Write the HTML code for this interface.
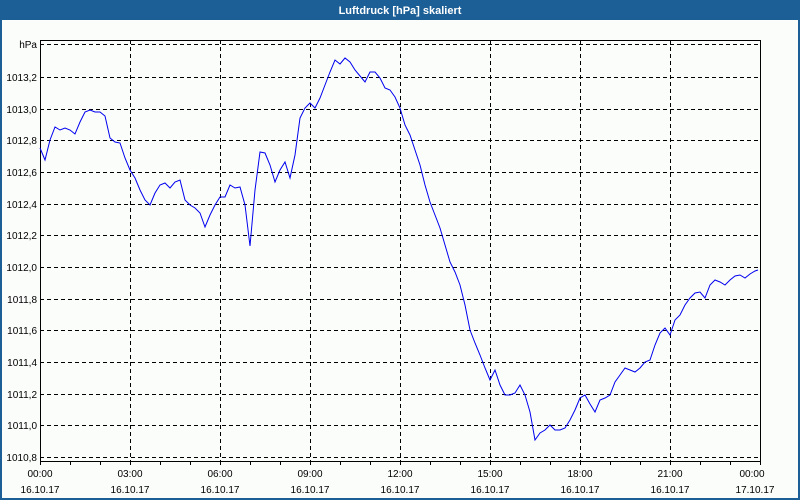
<!DOCTYPE html>
<html><head><style>
body{margin:0;width:800px;height:500px;overflow:hidden;background:#fbfdfb;font-family:"Liberation Sans",sans-serif;}
</style></head><body>
<svg width="800" height="500" xmlns="http://www.w3.org/2000/svg" style="position:absolute;left:0;top:0">
<rect x="0" y="0" width="800" height="500" fill="#1c5f97"/>
<rect x="2" y="20" width="796" height="478" fill="#fbfdfb"/>
<text x="400" y="14" fill="#fff" font-size="11" font-weight="bold" text-anchor="middle" font-family="Liberation Sans,sans-serif">Luftdruck [hPa] skaliert</text>
<g stroke="#000" stroke-width="1" stroke-dasharray="4,3" fill="none">
<path d="M40 44.5H760M40 77.5H760M40 109.5H760M40 140.5H760M40 172.5H760M40 204.5H760M40 235.5H760M40 267.5H760M40 299.5H760M40 330.5H760M40 362.5H760M40 394.5H760M40 425.5H760M40 457.5H760"/>
<path d="M130.5 40V461M220.5 40V461M310.5 40V461M400.5 40V461M490.5 40V461M580.5 40V461M670.5 40V461"/>
</g>
<rect x="40.5" y="40.5" width="720" height="421" fill="none" stroke="#000" stroke-width="1"/>
<g stroke="#000"><path d="M40.5 461v4M70.5 461v4M100.5 461v4M130.5 461v4M160.5 461v4M190.5 461v4M220.5 461v4M250.5 461v4M280.5 461v4M310.5 461v4M340.5 461v4M370.5 461v4M400.5 461v4M430.5 461v4M460.5 461v4M490.5 461v4M520.5 461v4M550.5 461v4M580.5 461v4M610.5 461v4M640.5 461v4M670.5 461v4M700.5 461v4M730.5 461v4M760.5 461v4"/></g>
<g font-size="10" fill="#000" text-anchor="end" font-family="Liberation Sans,sans-serif">
<text x="37" y="48">hPa</text><text x="37" y="81">1013,2</text><text x="37" y="113">1013,0</text><text x="37" y="144">1012,8</text><text x="37" y="176">1012,6</text><text x="37" y="208">1012,4</text><text x="37" y="239">1012,2</text><text x="37" y="271">1012,0</text><text x="37" y="303">1011,8</text><text x="37" y="334">1011,6</text><text x="37" y="366">1011,4</text><text x="37" y="398">1011,2</text><text x="37" y="429">1011,0</text><text x="37" y="461">1010,8</text>
</g>
<g font-size="10" fill="#000" text-anchor="middle" font-family="Liberation Sans,sans-serif">
<text x="40" y="477">00:00</text><text x="40" y="493">16.10.17</text>
<text x="130" y="477">03:00</text><text x="130" y="493">16.10.17</text>
<text x="220" y="477">06:00</text><text x="220" y="493">16.10.17</text>
<text x="310" y="477">09:00</text><text x="310" y="493">16.10.17</text>
<text x="400" y="477">12:00</text><text x="400" y="493">16.10.17</text>
<text x="490" y="477">15:00</text><text x="490" y="493">16.10.17</text>
<text x="580" y="477">18:00</text><text x="580" y="493">16.10.17</text>
<text x="670" y="477">21:00</text><text x="670" y="493">16.10.17</text>
<text x="752" y="477">00:00</text><text x="755" y="493">17.10.17</text>
</g>
<polyline fill="none" stroke="#0000ee" stroke-width="1" points="40,148 45,160 50,140 55,127 60,130 65,128 70,130 75,134 80,122 85,112 90,110 95,112 100,112 105,116 110,138 115,142 120,143 125,158 130,170 135,178 140,190 145,200 150,205 155,193 160,185 165,183 170,188 175,182 180,180 185,200 190,205 195,208 200,213 205,227 210,215 215,205 220,197 225,197 230,185 235,188 240,187 245,205 250,246 255,190 260,152 265,153 270,165 275,182 280,170 285,162 290,178 295,155 300,118 305,108 310,103 315,108 320,98 325,85 330,72 335,60 340,64 345,58 350,62 355,70 360,76 365,82 370,72 375,72 380,78 385,88 390,90 395,97 400,108 405,125 410,135 415,150 420,165 425,185 430,202 435,215 440,228 445,245 450,262 455,272 460,285 465,305 470,330 475,343 480,355 485,368 490,380 495,370 500,385 505,395 510,395 515,393 520,385 525,395 530,412 535,440 540,433 545,430 550,425 555,430 560,430 565,428 570,420 575,410 580,398 585,395 590,404 595,412 600,400 605,398 610,395 615,382 620,375 625,368 630,370 635,372 640,368 645,362 650,360 655,345 660,333 665,328 670,335 675,320 680,315 685,305 690,298 695,293 700,292 705,298 710,285 715,280 720,282 725,285 730,280 735,276 740,275 745,278 750,274 755,271 758,270"/>
</svg>
</body></html>
